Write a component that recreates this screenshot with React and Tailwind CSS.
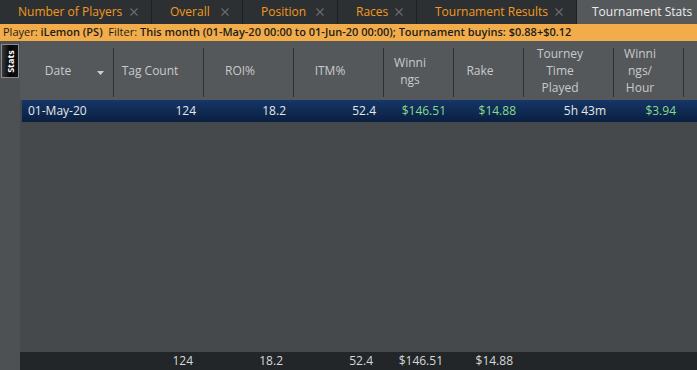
import React from "react";

const font = { fontFamily: '"Open Sans", "Noto Sans", sans-serif' };

const tabs = [
  { label: "Number of Players", w: "w-[152px]" },
  { label: "Overall", w: "w-[91px]" },
  { label: "Position", w: "w-[95px]" },
  { label: "Races", w: "w-[79px]" },
  { label: "Tournament Results", w: "w-[160px]" },
];

const cols = [
  { w: "w-[94px]", head: ["Date"], arrow: true },
  { w: "w-[90px]", head: ["Tag Count"] },
  { w: "w-[90px]", head: ["ROI%"] },
  { w: "w-[90px]", head: ["ITM%"] },
  { w: "w-[70px]", head: ["Winni", "ngs"] },
  { w: "w-[70px]", head: ["Rake"] },
  { w: "w-[90px]", head: ["Tourney", "Time", "Played"] },
  { w: "w-[70px]", head: ["Winni", "ngs/", "Hour"] },
];

const row = [
  { v: "01-May-20", left: true, w: "w-[92px]" },
  { v: "124", w: "w-[90px]" },
  { v: "18.2", w: "w-[90px]" },
  { v: "52.4", w: "w-[90px]" },
  { v: "$146.51", green: true, w: "w-[70px]" },
  { v: "$14.88", green: true, w: "w-[70px]" },
  { v: "5h 43m", w: "w-[90px]" },
  { v: "$3.94", green: true, w: "w-[70px]" },
];

const foot = [
  { v: "", w: "w-[94px]" },
  { v: "124", w: "w-[90px]" },
  { v: "18.2", w: "w-[90px]" },
  { v: "52.4", w: "w-[90px]" },
  { v: "$146.51", w: "w-[70px]" },
  { v: "$14.88", w: "w-[70px]" },
  { v: "", w: "w-[90px]" },
  { v: "", w: "w-[70px]" },
];

function CloseX() {
  return (
    <svg width="8" height="8" viewBox="0 0 8 8" className="ml-auto mr-[13px]">
      <path d="M0.5 0.5 L7.5 7.5 M7.5 0.5 L0.5 7.5" stroke="#6a6e71" strokeWidth="1.1" />
    </svg>
  );
}

export default function App() {
  return (
    <div className="w-[697px] h-[370px] overflow-hidden flex flex-col bg-[#45494c]" style={font}>
      {/* Tab bar */}
      <div className="h-[24px] flex bg-[#2c3033] text-[12px] shrink-0">
        {tabs.map((t) => (
          <div key={t.label} className={`${t.w} h-full flex items-center pl-[18px] border-r border-[#1d2022]`}>
            <span className="text-[#f39a1c] whitespace-nowrap">{t.label}</span>
            <CloseX />
          </div>
        ))}
        <div className="flex-1 h-full flex items-center pl-[15px] bg-[#55595c]">
          <span className="text-[#ececec] whitespace-nowrap">Tournament Stats</span>
        </div>
      </div>

      {/* Filter band */}
      <div className="h-[17px] shrink-0 bg-[#f2ad4a] flex items-center pl-[3px] text-[11px] text-[#1c1c1c] whitespace-nowrap">
        <span>Player:&nbsp;</span>
        <span className="font-semibold">iLemon (PS)</span>
        <span>&nbsp;&nbsp;Filter:&nbsp;</span>
        <span className="font-semibold">This month (01-May-20 00:00 to 01-Jun-20 00:00); Tournament buyins: $0.88+$0.12</span>
      </div>

      {/* Body */}
      <div className="flex-1 flex min-h-0">
        <div className="w-[20px] shrink-0 bg-[#4d5154] pt-[3px] pl-[1px]">
          <div className="w-[18px] h-[34px] border border-[#8a8d90] bg-gradient-to-r from-[#3a3a3a] via-[#050505] to-[#111] flex items-center justify-center">
            <span className="-rotate-90 text-[9px] font-bold text-white leading-none">Stats</span>
          </div>
        </div>
        <div className="flex-1 flex flex-col min-w-0">
          {/* Header */}
          <div className="h-[59px] shrink-0 flex bg-[#54585b] text-[12px] text-[#cacaca]">
            {cols.map((c, i) => (
              <div key={i} className={`${c.w} shrink-0 relative flex items-center`}>
                <div className="flex-1 pr-[18px] flex flex-col items-center leading-[17px] text-center">
                  {c.head.map((h) => (
                    <span key={h} className="whitespace-nowrap">{h}</span>
                  ))}
                </div>
                {c.arrow && (
                  <svg className="absolute right-[10px] top-[30px]" width="7" height="4" viewBox="0 0 7 4">
                    <path d="M0 0 L7 0 L3.5 4 Z" fill="#cfcfcf" />
                  </svg>
                )}
                <div className="absolute right-0 top-[7px] bottom-[3px] w-px bg-[#2e3235]" />
              </div>
            ))}
          </div>
          {/* Data row */}
          <div className="ml-[2px] h-[22px] shrink-0 flex items-center bg-gradient-to-b from-[#153668] to-[#0a1f40] text-[12px]">
            {row.map((c, i) => (
              <div
                key={i}
                className={`${c.w} shrink-0 ${c.left ? "pl-[6px] text-left" : "pr-[8px] text-right"} ${c.green ? "text-[#86dc86]" : "text-[#e6e6e6]"} whitespace-nowrap`}
              >
                {c.v}
              </div>
            ))}
          </div>
          <div className="flex-1" />
          {/* Footer */}
          <div className="h-[18px] shrink-0 flex items-center bg-[#222629] text-[12px] text-[#d8d8d8]">
            {foot.map((c, i) => (
              <div key={i} className={`${c.w} shrink-0 pr-[11px] text-right whitespace-nowrap`}>
                {c.v}
              </div>
            ))}
          </div>
        </div>
      </div>
    </div>
  );
}
